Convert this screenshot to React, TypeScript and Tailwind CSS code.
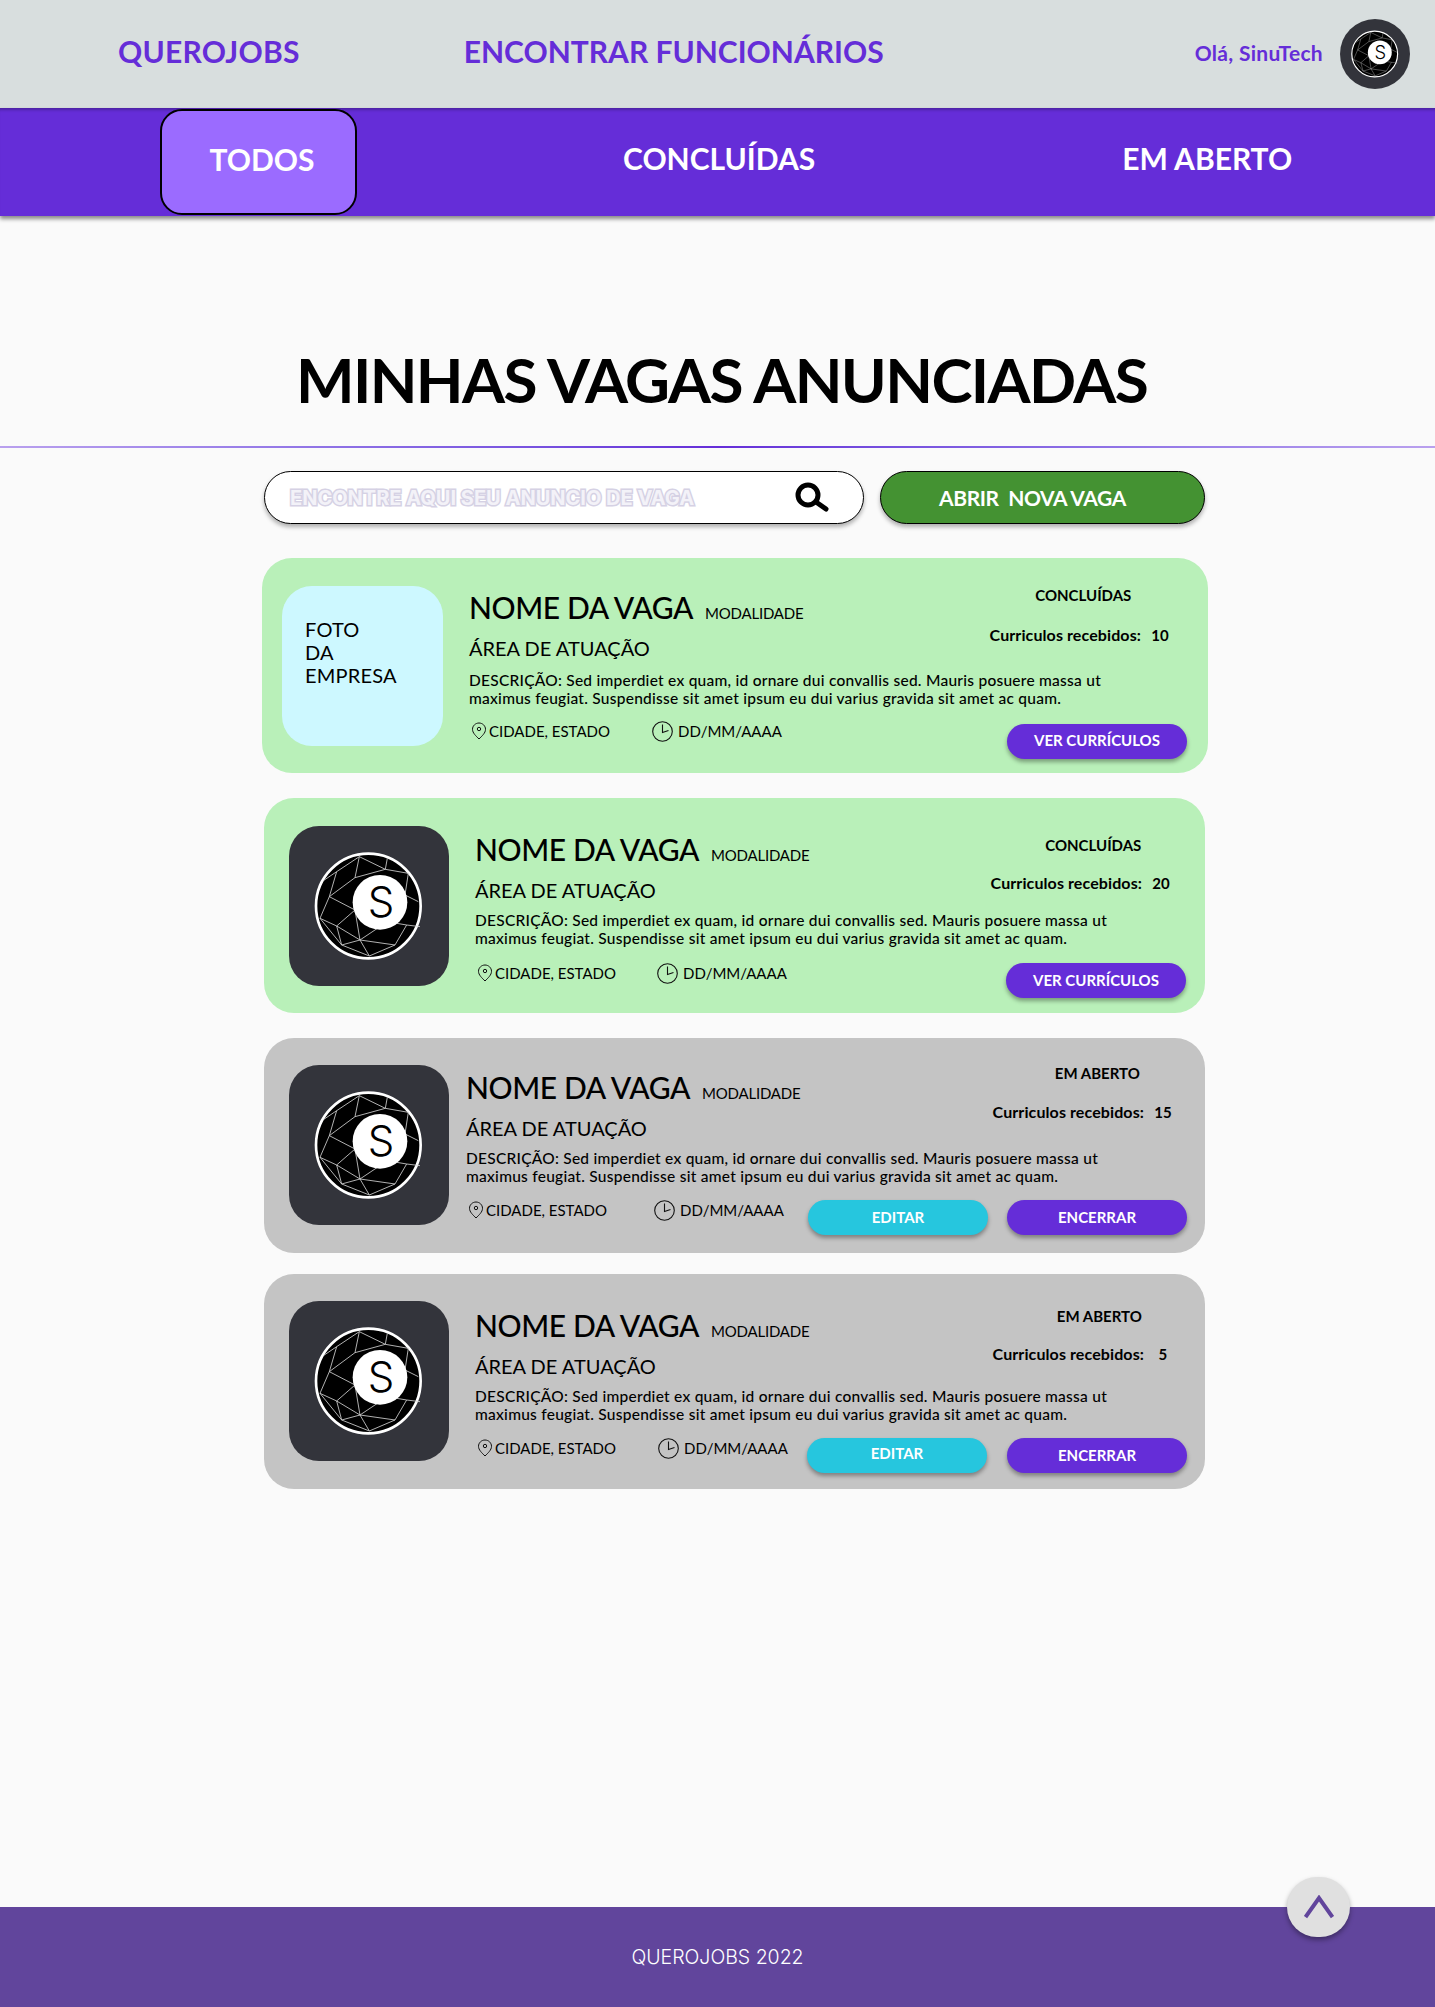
import React from "react";

function Logo({ className }: { className?: string }) {
  const lines = "M238 140L170 185M238 140L225 203M238 140L316 178M316 178L225 203M316 178L322 145M225 203L148 260M148 260L170 185M170 185L130 212M148 260L120 325M148 260L225 300M120 325L170 348M170 348L225 300M170 348L240 390M120 325L185 405M170 348L185 405M185 405L268 438M240 390L268 438M240 390L185 405M240 390L345 405M268 438L345 405M240 390L300 350M225 300L240 390M385 190L375 255M375 255L415 275M380 345L420 350M345 405L380 345M380 345L350 340M316 178L385 190";
  return (
    <svg viewBox="0 0 160 160" className={className}>
      <rect width="160" height="160" fill="#33343b" />
      <g transform="translate(-9 -16) scale(0.3333)">
        <circle cx="265" cy="288" r="157" fill="#000" stroke="#fff" strokeWidth="8" />
        <path d={lines} stroke="#d4d4d4" strokeWidth="2.500" fill="none" />
        <circle cx="300" cy="277" r="82" fill="#fff" />
      </g>
      <text x="92" y="91" textAnchor="middle" fontSize="42" fontFamily="Inter, sans-serif" fontWeight="300" fill="#000">S</text>
    </svg>
  );
}

function Pin() {
  return (
    <svg viewBox="0 0 16 18" className="h-[18px] w-[16px] shrink-0" fill="none" stroke="#111" strokeWidth="1">
      <path d="M8 17C5 14 1.500 11 1.500 7.300C1.500 3.800 4.500 1 8 1C11.500 1 14.500 3.800 14.500 7.300C14.500 11 11 14 8 17Z" />
      <circle cx="8" cy="7" r="1.700" />
    </svg>
  );
}

function Clock() {
  return (
    <svg viewBox="0 0 21 21" className="h-[21px] w-[21px] shrink-0" fill="none" stroke="#111" strokeWidth="1.100">
      <circle cx="10.500" cy="10.500" r="9.800" />
      <path d="M10.500 3.500V11.500L16.500 9.500" />
    </svg>
  );
}

function Btn({ label, className }: { label: string; className: string }) {
  return (
    <div className={`flex h-[35px] items-center justify-center rounded-[18px] text-[15px] font-bold text-white shadow-[0_3px_4px_rgba(0,0,0,0.35)] ${className}`}>
      {label}
    </div>
  );
}

type CardProps = {
  className: string;
  image: React.ReactNode;
  contentClass: string;
  topClass: string;
  statusClass: string;
  statusLabelClass: string;
  status: string;
  statusGapClass: string;
  count: string;
  metaClass: string;
  dateClass: string;
  actions: React.ReactNode;
};

function Card(p: CardProps) {
  return (
    <section className={`flex h-[215px] rounded-[30px] ${p.className}`}>
      {p.image}
      <div className={`flex min-w-0 flex-1 flex-col ${p.contentClass}`}>
        <div className={`flex justify-between ${p.topClass}`}>
          <div>
            <div className="flex items-baseline">
              <span className="text-[30px] leading-[40px] font-medium tracking-[-0.4px] text-black">NOME DA VAGA</span>
              <span className="ml-[12px] text-[15px] tracking-[-0.2px] text-black">MODALIDADE</span>
            </div>
            <div className="mt-[7px] text-[20px] leading-[28px] text-black">ÁREA DE ATUAÇÃO</div>
          </div>
          <div className={`flex flex-col items-center font-bold text-black ${p.statusClass}`}>
            <div className={`text-[15px] leading-[18px] ${p.statusLabelClass}`}>{p.status}</div>
            <div className={`flex text-[16px] leading-[18px] tracking-[0.1px] ${p.statusGapClass}`}>
              <span>Curriculos recebidos:</span>
              <span className="ml-[10px] min-w-[18px] text-center text-[15px]">{p.count}</span>
            </div>
          </div>
        </div>
        <p className="text-[15.500px] leading-[18px] font-medium tracking-[0.25px] text-black">
          DESCRIÇÃO: Sed imperdiet ex quam, id ornare dui convallis sed. Mauris posuere massa ut
          <br />
          maximus feugiat. Suspendisse sit amet ipsum eu dui varius gravida sit amet ac quam.
        </p>
        <div className={`flex items-start ${p.metaClass}`}>
          <div className="ml-[2px] flex h-[21px] items-center gap-[2px] text-[15px] text-black">
            <Pin />
            <span>CIDADE, ESTADO</span>
          </div>
          <div className={`flex h-[21px] items-center gap-[5px] text-[15px] text-black ${p.dateClass}`}>
            <Clock />
            <span>DD/MM/AAAA</span>
          </div>
          {p.actions}
        </div>
      </div>
    </section>
  );
}

const logoImage = (cls: string) => (
  <div className={`h-[160px] w-[160px] shrink-0 overflow-hidden rounded-[30px] ${cls}`}>
    <Logo className="h-full w-full" />
  </div>
);

export default function App() {
  return (
    <div className="flex min-h-[2007px] flex-col bg-[#fafafa] font-['Lato','Open_Sans',sans-serif]">
      <header className="flex h-[108px] items-center bg-[#d8dede] pr-[25px] pl-[118px] text-[#652dd8]">
        <span className="pb-[5px] text-[30px] font-bold tracking-[0.25px]">QUEROJOBS</span>
        <span className="ml-[164px] pb-[5px] text-[30px] font-bold">ENCONTRAR FUNCIONÁRIOS</span>
        <span className="ml-auto pb-[2px] text-[21px] font-bold tracking-[0.3px]">Olá, SinuTech</span>
        <div className="ml-[17px] h-[70px] w-[70px] overflow-hidden rounded-full">
          <Logo className="h-full w-full" />
        </div>
      </header>

      <nav className="flex h-[108px] items-center bg-[#652dd8] pl-[160px] text-[30px] font-bold text-white shadow-[0_3px_4px_rgba(0,0,0,0.45),inset_0_4px_3px_-2px_rgba(0,0,0,0.25)]">
        <div className="flex h-[106px] w-[197px] items-center justify-center rounded-[22px] border-2 border-black bg-[#9b6bff] pb-[6px] pl-[7px]">TODOS</div>
        <span className="ml-[266px] pb-[8px]">CONCLUÍDAS</span>
        <span className="ml-[307px] pb-[8px]">EM ABERTO</span>
      </nav>

      <h1 className="mt-[123px] pl-[8px] text-center text-[62px] leading-[80px] font-bold tracking-[-1.6px] text-black">MINHAS VAGAS ANUNCIADAS</h1>
      <div className="mt-[27px] h-[1.500px] bg-gradient-to-r from-[#b9a0ee] via-[#652dd8] to-[#b9a0ee]" />

      <div className="mt-[23px] ml-[264px] flex gap-[16px]">
        <div className="flex h-[53px] w-[600px] items-center rounded-[27px] border border-black bg-white pr-[34px] pl-[25px] shadow-[0_3px_4px_rgba(0,0,0,0.3)]">
          <span className="pt-[1px] font-['Inter',sans-serif] text-[20px] font-bold text-[#f3f2f8] [-webkit-text-stroke:3px_#d5d1e4] [paint-order:stroke_fill]">ENCONTRE AQUI SEU ANUNCIO DE VAGA</span>
          <svg viewBox="0 0 34 30" className="ml-auto h-[30px] w-[34px]" fill="none" stroke="#000" strokeLinecap="round">
            <circle cx="13" cy="13" r="10" strokeWidth="5" />
            <path d="M21 20L31 27" strokeWidth="5" />
          </svg>
        </div>
        <div className="flex h-[53px] w-[325px] items-center justify-center rounded-[27px] border border-black bg-[#449232] pt-[2px] pr-[20px] text-[21px] font-bold tracking-[-0.4px] whitespace-pre text-white shadow-[0_3px_4px_rgba(0,0,0,0.3)]">ABRIR  NOVA VAGA</div>
      </div>

      <main className="mt-[34px] flex flex-col">
        <Card
          className="ml-[262px] w-[946px] bg-[#b9f0b9]"
          image={
            <div className="mt-[28px] ml-[20px] h-[160px] w-[161px] shrink-0 rounded-[30px] bg-[#cdf8ff] pt-[32px] pl-[23px] text-[20px] leading-[23px] tracking-[0.2px] text-black">
              FOTO<br />DA<br />EMPRESA
            </div>
          }
          contentClass="ml-[26px] pt-[29px] pr-[21px]"
          topClass="h-[84px]"
          statusClass="-mt-[1px] pr-[18px]"
          statusLabelClass="pl-[8px]"
          statusGapClass="mt-[22px]"
          status="CONCLUÍDAS"
          count="10"
          metaClass="mt-[14px]"
          dateClass="ml-[42px]"
          actions={<Btn label="VER CURRÍCULOS" className="mt-[3px] ml-auto w-[180px] bg-[#652dd8] pb-[2px]" />}
        />
        <Card
          className="mt-[25px] ml-[264px] w-[941px] bg-[#b9f0b9]"
          image={logoImage("mt-[28px] ml-[25px]")}
          contentClass="ml-[26px] pt-[31px] pr-[19px]"
          topClass="h-[82px]"
          statusClass="pt-[7px] pr-[16px]"
          statusLabelClass="pl-[26px]"
          statusGapClass="mt-[20px]"
          status="CONCLUÍDAS"
          count="20"
          metaClass="mt-[16px]"
          dateClass="ml-[41px]"
          actions={<Btn label="VER CURRÍCULOS" className="ml-auto w-[180px] bg-[#652dd8]" />}
        />
        <Card
          className="mt-[25px] ml-[264px] w-[941px] bg-[#c4c4c4]"
          image={logoImage("mt-[27px] ml-[25px]")}
          contentClass="ml-[17px] pt-[29px] pr-[18px]"
          topClass="h-[82px]"
          statusClass="-mt-[3px] pr-[15px]"
          statusLabelClass="pl-[30px]"
          statusGapClass="mt-[21px]"
          status="EM ABERTO"
          count="15"
          metaClass="mt-[15px]"
          dateClass="ml-[47px]"
          actions={
            <>
              <Btn label="EDITAR" className="ml-auto w-[180px] bg-[#26c6de]" />
              <Btn label="ENCERRAR" className="ml-[19px] w-[180px] bg-[#652dd8]" />
            </>
          }
        />
        <Card
          className="mt-[21px] ml-[264px] w-[941px] bg-[#c4c4c4]"
          image={logoImage("mt-[27px] ml-[25px]")}
          contentClass="ml-[26px] pt-[31px] pr-[18px]"
          topClass="h-[82px]"
          statusClass="pt-[2px] pr-[15px]"
          statusLabelClass="pl-[34px]"
          statusGapClass="mt-[20px]"
          status="EM ABERTO"
          count="5"
          metaClass="mt-[15px]"
          dateClass="ml-[42px]"
          actions={
            <>
              <Btn label="EDITAR" className="ml-auto w-[180px] bg-[#26c6de] pb-[4px]" />
              <Btn label="ENCERRAR" className="ml-[20px] w-[180px] bg-[#652dd8]" />
            </>
          }
        />
      </main>

      <footer className="relative mt-auto flex h-[100px] items-center justify-center bg-[#61459c] pt-[2px] text-[19.500px] text-white">
        <span className="font-['Inter',sans-serif] font-light">QUEROJOBS 2022</span>
        <div className="absolute -top-[30px] left-[1287px] flex h-[60px] w-[63px] items-center justify-center rounded-full bg-[#e0e0e0] shadow-[0_3px_5px_rgba(0,0,0,0.35)]">
          <svg viewBox="0 0 30 24" className="h-[24px] w-[30px]" fill="none" stroke="#61459c" strokeWidth="4">
            <path d="M1.500 22L15 3L28.500 22" />
          </svg>
        </div>
      </footer>
    </div>
  );
}
